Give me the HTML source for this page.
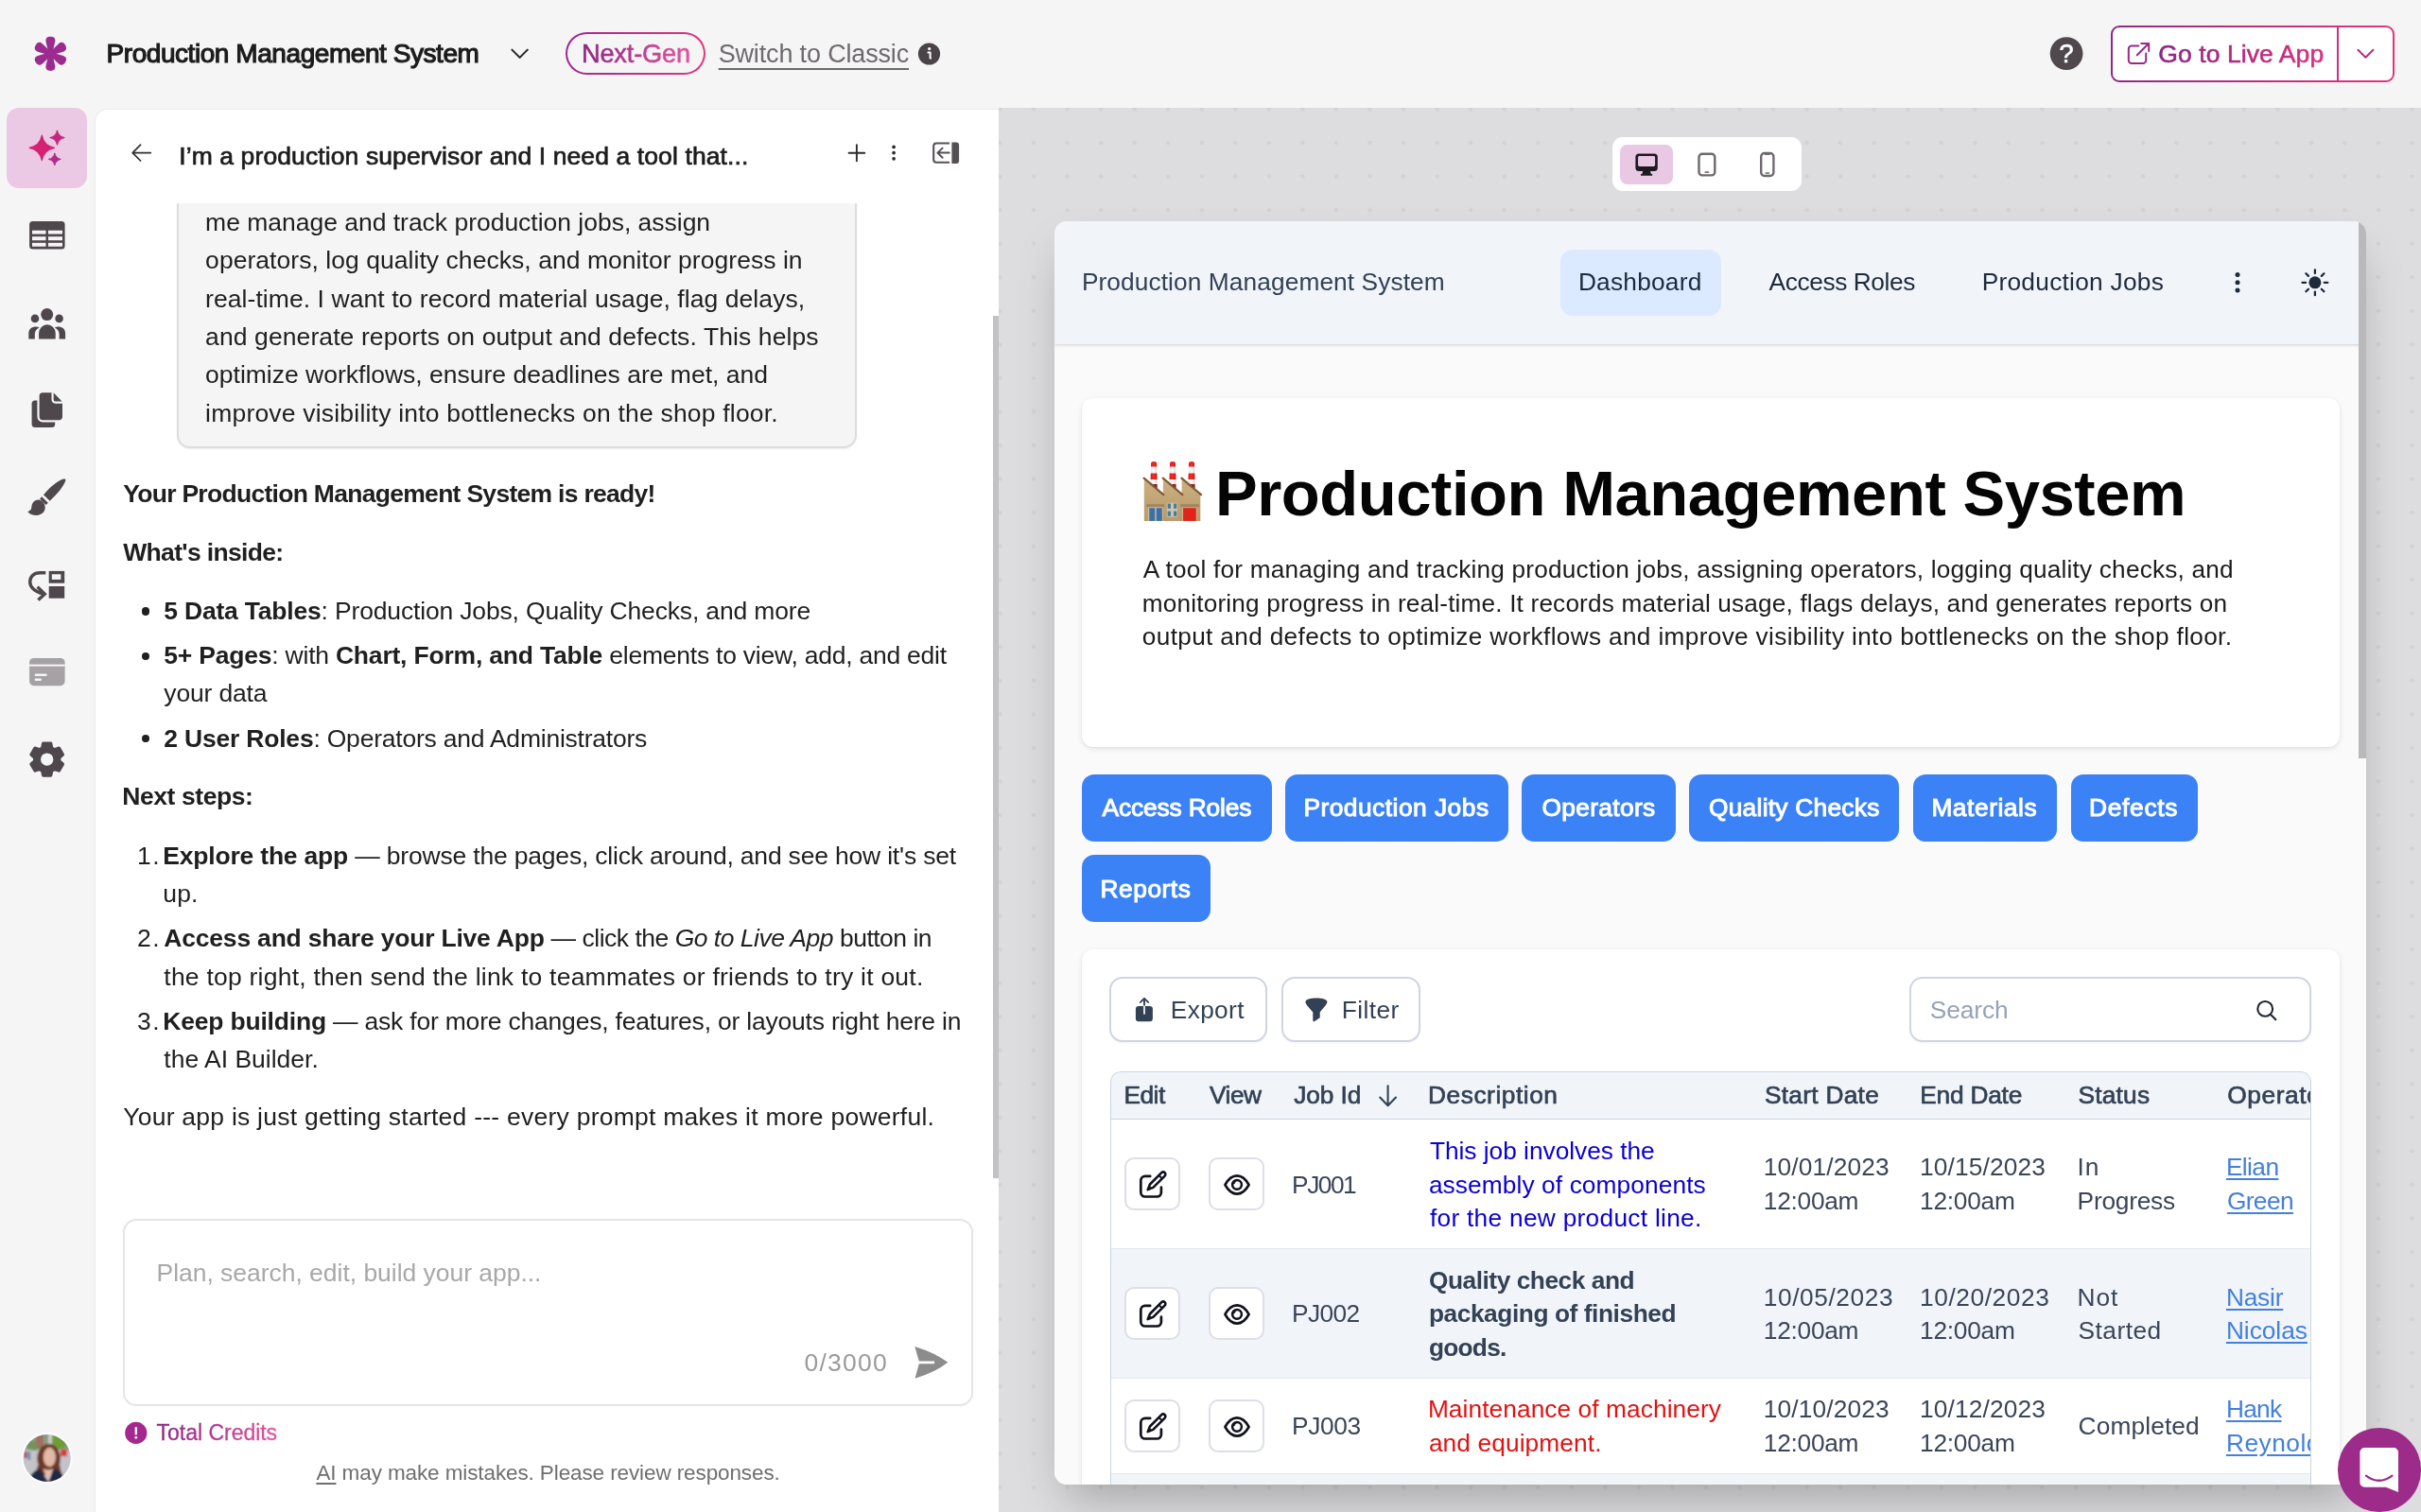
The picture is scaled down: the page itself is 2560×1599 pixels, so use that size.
<!DOCTYPE html>
<html lang="en"><head><meta charset="utf-8"><meta name="viewport" content="width=2560"><title>Production Management System</title>
<style>
*{box-sizing:border-box;margin:0;padding:0}
html,body{width:2560px;height:1599px;overflow:hidden}
body{position:relative;background:#f5f5f5;font-family:"Liberation Sans",sans-serif;color:#1f1f1f}
div,svg,span.t{position:absolute}
.root{left:0;top:0;width:2560px;height:1599px;will-change:transform}
.t{white-space:nowrap;line-height:1}
b{font-weight:700}
</style></head>
<body>
<div class="root">
<div class="pv" style="left:1055.5px;top:114.0px;width:1504.5px;height:1485.0px;background-color:#dddcde;background-image:radial-gradient(circle,#d3d1d5 0,#d3d1d5 1.5px,rgba(211,209,213,0) 2.8px);background-size:35.55px 35.55px;background-position:-16.3px -16.3px;"></div>
<div style="left:100.0px;top:114.5px;width:955.5px;height:1485.5px;background:#fff;border-top-left-radius:14px;border:1px solid #ececec;border-right:none;border-bottom:none;"></div>
<div style="left:1049.5px;top:334.0px;width:6.0px;height:912.0px;background:#c2c1c3;"></div>
<div style="left:186.6px;top:200.0px;width:719.4px;height:274.4px;background:#f5f5f5;border:2px solid #dddddd;border-radius:0 0 14px 14px;box-shadow:0 1px 2px rgba(0,0,0,.07);clip-path:inset(15px -5px -7px -5px);"></div>
<div style="left:149.7px;top:642.3px;width:8.4px;height:8.4px;background:#1f1f1f;border-radius:50%;"></div>
<div style="left:149.7px;top:689.8px;width:8.4px;height:8.4px;background:#1f1f1f;border-radius:50%;"></div>
<div style="left:149.7px;top:777.0px;width:8.4px;height:8.4px;background:#1f1f1f;border-radius:50%;"></div>
<div style="left:129.7px;top:1288.9px;width:898.9px;height:197.7px;background:#fff;border:2px solid #e5e5e5;border-radius:14px;"></div>
<div style="left:7.1px;top:113.6px;width:85.1px;height:85.4px;background:#ebc9e5;border-radius:13px;"></div>
<div style="left:598.4px;top:33.5px;width:147.6px;height:45.8px;border-radius:23px;background:linear-gradient(#f5f5f5,#f5f5f5) padding-box,linear-gradient(90deg,#9a2a90,#e2357c) border-box;border:2px solid transparent;"></div>
<div style="left:2231.5px;top:27.0px;width:300.0px;height:59.6px;border-radius:9px;background:linear-gradient(#fff,#fff) padding-box,linear-gradient(90deg,#8f2a86,#e2357c) border-box;border:2px solid transparent;"></div>
<div style="left:2471.0px;top:28.0px;width:2.0px;height:57.6px;background:#cf2f80;"></div>
<div style="left:1705.0px;top:144.8px;width:199.8px;height:57.6px;background:#fff;border-radius:11px;"></div>
<div style="left:1712.5px;top:152.9px;width:56.5px;height:42.1px;background:#e9c8e3;border-radius:8px;"></div>
<div style="left:1115.0px;top:234.0px;width:1387.0px;height:1336.0px;border-radius:13px;box-shadow:0 25px 50px -12px rgba(0,0,0,.27);"></div>
<div style="left:1115.0px;top:234.0px;width:1387.0px;height:1336.0px;background:#fafafa;border-radius:13px;overflow:hidden;"><div style="left:0.0px;top:0.0px;width:1387.0px;height:130.0px;background:#f1f5f9;box-shadow:0 1px 3px rgba(15,23,42,.18);"></div><div style="left:534.7px;top:29.5px;width:170.3px;height:70.0px;background:#dbeafe;border-radius:13px;"></div><div style="left:29.0px;top:187.0px;width:1330.0px;height:369.0px;background:#fff;border-radius:12px;box-shadow:0 2px 6px rgba(0,0,0,.09),0 1px 2px rgba(0,0,0,.05);"></div><div style="left:29.0px;top:585.0px;width:200.7px;height:71.0px;background:#3b82f6;border-radius:13px;"></div><div style="left:243.9px;top:585.0px;width:236.1px;height:71.0px;background:#3b82f6;border-radius:13px;"></div><div style="left:494.3px;top:585.0px;width:162.7px;height:71.0px;background:#3b82f6;border-radius:13px;"></div><div style="left:671.4px;top:585.0px;width:221.6px;height:71.0px;background:#3b82f6;border-radius:13px;"></div><div style="left:907.9px;top:585.0px;width:152.1px;height:71.0px;background:#3b82f6;border-radius:13px;"></div><div style="left:1074.6px;top:585.0px;width:134.9px;height:71.0px;background:#3b82f6;border-radius:13px;"></div><div style="left:29.0px;top:670.4px;width:136.0px;height:70.8px;background:#3b82f6;border-radius:13px;"></div><div style="left:29.0px;top:770.0px;width:1330.0px;height:696.0px;background:#fff;border-radius:12px;box-shadow:0 2px 6px rgba(0,0,0,.09),0 1px 2px rgba(0,0,0,.05);"></div><div style="left:58.4px;top:799.0px;width:166.3px;height:69.4px;background:#fff;border:2px solid #cfd6e2;border-radius:14px;box-shadow:0 1px 2px rgba(15,23,42,.05);"></div><div style="left:240.0px;top:799.0px;width:147.4px;height:69.4px;background:#fff;border:2px solid #cfd6e2;border-radius:14px;box-shadow:0 1px 2px rgba(15,23,42,.05);"></div><div style="left:904.0px;top:799.0px;width:425.0px;height:69.4px;background:#fff;border:2px solid #cfd6e2;border-radius:14px;box-shadow:0 1px 2px rgba(15,23,42,.05);"></div><div style="left:58.5px;top:899.0px;width:1270.5px;height:567.0px;overflow:hidden;border-radius:11px 11px 0 0;"><div style="left:0.0px;top:0.0px;width:1270.5px;height:51.0px;background:#f1f5f9;border-bottom:1.5px solid #cbd5e1;"></div><div style="left:0.0px;top:187.4px;width:1270.5px;height:137.6px;background:#f1f5f9;border-top:1.5px solid #e2e8f0;border-bottom:1.5px solid #e2e8f0;"></div><div style="left:0.0px;top:425.0px;width:1270.5px;height:142.0px;background:#f1f5f9;border-top:1.5px solid #e2e8f0;"></div><div style="left:15.8px;top:91.3px;width:58.7px;height:56.0px;background:#fff;border:2px solid #dcdee8;border-radius:10px;"></div><div style="left:104.4px;top:91.3px;width:58.7px;height:56.0px;background:#fff;border:2px solid #dcdee8;border-radius:10px;"></div><svg style="left:25.3px;top:99.6px;" width="40.0" height="40.0" viewBox="0 0 40 40"><path d="M17.2,10.9 H11.8 a4.5,4.5 0 0 0 -4.5,4.5 V28.0 a4.5,4.5 0 0 0 4.5,4.5 H24.4 a4.5,4.5 0 0 0 4.5,-4.5 V22.7" fill="none" stroke="#11111c" stroke-width="2.7" stroke-linecap="round"/><g transform="translate(14.4,25.4) rotate(-45)"><path d="M0.4,0 L6,-2.4 H23.4 a2.4,2.4 0 0 1 0,4.8 H6 Z" fill="#fff" stroke="#11111c" stroke-width="2.6" stroke-linejoin="round"/><path d="M0.4,0 L4.6,-1.8 V1.8Z" fill="#11111c"/><path d="M19.4,-2.4 V2.4" stroke="#11111c" stroke-width="2"/></g></svg><svg style="left:114.1px;top:104.6px;" width="40.0" height="30.0" viewBox="0 0 40 30"><path d="M7.4,15 C10.9,8.7 14.9,5.4 20,5.4 C25.1,5.4 29.1,8.7 32.6,15 C29.1,21.3 25.1,24.6 20,24.6 C14.9,24.6 10.9,21.3 7.4,15Z" fill="none" stroke="#11111c" stroke-width="2.6" stroke-linejoin="round"/><circle cx="20" cy="14.8" r="4.9" fill="none" stroke="#11111c" stroke-width="2.5"/><path d="M15.6,14.2 A4.6,4.6 0 0 1 20.4,10.3 A3.6,3.6 0 0 0 17.4,13.6Z" fill="#11111c" stroke="#11111c" stroke-width="1"/></svg><div style="left:15.8px;top:228.3px;width:58.7px;height:56.0px;background:#fff;border:2px solid #dcdee8;border-radius:10px;"></div><div style="left:104.4px;top:228.3px;width:58.7px;height:56.0px;background:#fff;border:2px solid #dcdee8;border-radius:10px;"></div><svg style="left:25.3px;top:236.6px;" width="40.0" height="40.0" viewBox="0 0 40 40"><path d="M17.2,10.9 H11.8 a4.5,4.5 0 0 0 -4.5,4.5 V28.0 a4.5,4.5 0 0 0 4.5,4.5 H24.4 a4.5,4.5 0 0 0 4.5,-4.5 V22.7" fill="none" stroke="#11111c" stroke-width="2.7" stroke-linecap="round"/><g transform="translate(14.4,25.4) rotate(-45)"><path d="M0.4,0 L6,-2.4 H23.4 a2.4,2.4 0 0 1 0,4.8 H6 Z" fill="#fff" stroke="#11111c" stroke-width="2.6" stroke-linejoin="round"/><path d="M0.4,0 L4.6,-1.8 V1.8Z" fill="#11111c"/><path d="M19.4,-2.4 V2.4" stroke="#11111c" stroke-width="2"/></g></svg><svg style="left:114.1px;top:241.6px;" width="40.0" height="30.0" viewBox="0 0 40 30"><path d="M7.4,15 C10.9,8.7 14.9,5.4 20,5.4 C25.1,5.4 29.1,8.7 32.6,15 C29.1,21.3 25.1,24.6 20,24.6 C14.9,24.6 10.9,21.3 7.4,15Z" fill="none" stroke="#11111c" stroke-width="2.6" stroke-linejoin="round"/><circle cx="20" cy="14.8" r="4.9" fill="none" stroke="#11111c" stroke-width="2.5"/><path d="M15.6,14.2 A4.6,4.6 0 0 1 20.4,10.3 A3.6,3.6 0 0 0 17.4,13.6Z" fill="#11111c" stroke="#11111c" stroke-width="1"/></svg><div style="left:15.8px;top:347.3px;width:58.7px;height:56.0px;background:#fff;border:2px solid #dcdee8;border-radius:10px;"></div><div style="left:104.4px;top:347.3px;width:58.7px;height:56.0px;background:#fff;border:2px solid #dcdee8;border-radius:10px;"></div><svg style="left:25.3px;top:355.6px;" width="40.0" height="40.0" viewBox="0 0 40 40"><path d="M17.2,10.9 H11.8 a4.5,4.5 0 0 0 -4.5,4.5 V28.0 a4.5,4.5 0 0 0 4.5,4.5 H24.4 a4.5,4.5 0 0 0 4.5,-4.5 V22.7" fill="none" stroke="#11111c" stroke-width="2.7" stroke-linecap="round"/><g transform="translate(14.4,25.4) rotate(-45)"><path d="M0.4,0 L6,-2.4 H23.4 a2.4,2.4 0 0 1 0,4.8 H6 Z" fill="#fff" stroke="#11111c" stroke-width="2.6" stroke-linejoin="round"/><path d="M0.4,0 L4.6,-1.8 V1.8Z" fill="#11111c"/><path d="M19.4,-2.4 V2.4" stroke="#11111c" stroke-width="2"/></g></svg><svg style="left:114.1px;top:360.6px;" width="40.0" height="30.0" viewBox="0 0 40 30"><path d="M7.4,15 C10.9,8.7 14.9,5.4 20,5.4 C25.1,5.4 29.1,8.7 32.6,15 C29.1,21.3 25.1,24.6 20,24.6 C14.9,24.6 10.9,21.3 7.4,15Z" fill="none" stroke="#11111c" stroke-width="2.6" stroke-linejoin="round"/><circle cx="20" cy="14.8" r="4.9" fill="none" stroke="#11111c" stroke-width="2.5"/><path d="M15.6,14.2 A4.6,4.6 0 0 1 20.4,10.3 A3.6,3.6 0 0 0 17.4,13.6Z" fill="#11111c" stroke="#11111c" stroke-width="1"/></svg><svg style="left:281.5px;top:12.0px;" width="26.0" height="28.0" viewBox="0 0 26 28"><path d="M12.6,3.2 V23.6 M4.2,15.6 L12.6,24.2 L21,15.6" fill="none" stroke="#334155" stroke-width="2.1" stroke-linecap="round" stroke-linejoin="round"/></svg><span class="t" style="left:14.90px;top:12.04px;font-size:26.3px;letter-spacing:-0.474px;color:#334155;-webkit-text-stroke:0.65px currentColor;">Edit</span><span class="t" style="left:105.50px;top:12.04px;font-size:26.3px;letter-spacing:-0.480px;color:#334155;-webkit-text-stroke:0.65px currentColor;">View</span><span class="t" style="left:194.80px;top:12.04px;font-size:26.3px;letter-spacing:-0.123px;color:#334155;-webkit-text-stroke:0.65px currentColor;">Job Id</span><span class="t" style="left:336.60px;top:12.04px;font-size:26.3px;letter-spacing:0.528px;color:#334155;-webkit-text-stroke:0.65px currentColor;">Description</span><span class="t" style="left:692.40px;top:12.04px;font-size:26.3px;letter-spacing:0.282px;color:#334155;-webkit-text-stroke:0.65px currentColor;">Start Date</span><span class="t" style="left:856.80px;top:12.04px;font-size:26.3px;letter-spacing:-0.233px;color:#334155;-webkit-text-stroke:0.65px currentColor;">End Date</span><span class="t" style="left:1024.10px;top:12.04px;font-size:26.3px;letter-spacing:0.177px;color:#334155;-webkit-text-stroke:0.65px currentColor;">Status</span><span class="t" style="left:1181.80px;top:12.04px;font-size:26.3px;letter-spacing:0.550px;color:#334155;-webkit-text-stroke:0.65px currentColor;">Operator</span><span class="t" style="left:192.60px;top:106.54px;font-size:26.3px;letter-spacing:-1.488px;color:#3a4558;">PJ001</span><span class="t" style="left:338.40px;top:70.84px;font-size:26.3px;letter-spacing:-0.022px;color:#0b00d1;">This job involves the</span><span class="t" style="left:337.40px;top:106.54px;font-size:26.3px;letter-spacing:0.094px;color:#0b00d1;">assembly of components</span><span class="t" style="left:338.40px;top:141.94px;font-size:26.3px;letter-spacing:0.281px;color:#0b00d1;">for the new product line.</span><span class="t" style="left:691.30px;top:88.34px;font-size:26.3px;letter-spacing:0.133px;color:#3a4558;">10/01/2023</span><span class="t" style="left:691.30px;top:124.04px;font-size:26.3px;letter-spacing:-0.273px;color:#3a4558;">12:00am</span><span class="t" style="left:856.60px;top:88.34px;font-size:26.3px;letter-spacing:0.122px;color:#3a4558;">10/15/2023</span><span class="t" style="left:856.60px;top:124.04px;font-size:26.3px;letter-spacing:-0.273px;color:#3a4558;">12:00am</span><span class="t" style="left:1023.10px;top:88.34px;font-size:26.3px;letter-spacing:0.800px;color:#3a4558;">In</span><span class="t" style="left:1023.10px;top:124.04px;font-size:26.3px;letter-spacing:-0.241px;color:#3a4558;">Progress</span><span class="t" style="left:1180.40px;top:88.34px;font-size:26.3px;letter-spacing:-0.590px;color:#4380dc;text-decoration:underline;text-decoration-thickness:1.8px;text-underline-offset:3px;">Elian</span><span class="t" style="left:1181.40px;top:124.04px;font-size:26.3px;letter-spacing:-0.617px;color:#4380dc;text-decoration:underline;text-decoration-thickness:1.8px;text-underline-offset:3px;">Green</span><span class="t" style="left:192.60px;top:243.34px;font-size:26.3px;letter-spacing:-0.663px;color:#3a4558;">PJ002</span><span class="t" style="left:337.40px;top:208.04px;font-size:26.3px;font-weight:700;letter-spacing:-0.457px;color:#334155;">Quality check and</span><span class="t" style="left:337.40px;top:243.34px;font-size:26.3px;font-weight:700;letter-spacing:-0.432px;color:#334155;">packaging of finished</span><span class="t" style="left:337.40px;top:279.04px;font-size:26.3px;font-weight:700;letter-spacing:-0.736px;color:#334155;">goods.</span><span class="t" style="left:691.30px;top:225.54px;font-size:26.3px;letter-spacing:0.567px;color:#3a4558;">10/05/2023</span><span class="t" style="left:691.30px;top:260.84px;font-size:26.3px;letter-spacing:-0.273px;color:#3a4558;">12:00am</span><span class="t" style="left:856.60px;top:225.54px;font-size:26.3px;letter-spacing:0.567px;color:#3a4558;">10/20/2023</span><span class="t" style="left:856.60px;top:260.84px;font-size:26.3px;letter-spacing:-0.273px;color:#3a4558;">12:00am</span><span class="t" style="left:1023.10px;top:225.54px;font-size:26.3px;letter-spacing:0.900px;color:#3a4558;">Not</span><span class="t" style="left:1024.10px;top:260.84px;font-size:26.3px;letter-spacing:0.455px;color:#3a4558;">Started</span><span class="t" style="left:1180.40px;top:225.54px;font-size:26.3px;letter-spacing:-0.204px;color:#4380dc;text-decoration:underline;text-decoration-thickness:1.8px;text-underline-offset:3px;">Nasir</span><span class="t" style="left:1180.40px;top:260.84px;font-size:26.3px;letter-spacing:-0.031px;color:#4380dc;text-decoration:underline;text-decoration-thickness:1.8px;text-underline-offset:3px;">Nicolas</span><span class="t" style="left:192.60px;top:362.34px;font-size:26.3px;letter-spacing:-0.413px;color:#3a4558;">PJ003</span><span class="t" style="left:336.40px;top:344.44px;font-size:26.3px;letter-spacing:0.070px;color:#e11212;">Maintenance of machinery</span><span class="t" style="left:337.40px;top:379.84px;font-size:26.3px;letter-spacing:0.101px;color:#e11212;">and equipment.</span><span class="t" style="left:691.30px;top:344.44px;font-size:26.3px;letter-spacing:0.133px;color:#3a4558;">10/10/2023</span><span class="t" style="left:691.30px;top:379.84px;font-size:26.3px;letter-spacing:-0.273px;color:#3a4558;">12:00am</span><span class="t" style="left:856.60px;top:344.44px;font-size:26.3px;letter-spacing:0.122px;color:#3a4558;">10/12/2023</span><span class="t" style="left:856.60px;top:379.84px;font-size:26.3px;letter-spacing:-0.273px;color:#3a4558;">12:00am</span><span class="t" style="left:1024.10px;top:362.34px;font-size:26.3px;letter-spacing:0.119px;color:#3a4558;">Completed</span><span class="t" style="left:1180.40px;top:344.44px;font-size:26.3px;letter-spacing:-0.714px;color:#4380dc;text-decoration:underline;text-decoration-thickness:1.8px;text-underline-offset:3px;">Hank</span><span class="t" style="left:1180.40px;top:379.84px;font-size:26.3px;letter-spacing:0.500px;color:#4380dc;text-decoration:underline;text-decoration-thickness:1.8px;text-underline-offset:3px;">Reynolds</span><div style="left:0.0px;top:0.0px;width:1270.5px;height:567.0px;border:1.5px solid #cbd5e1;border-radius:11px 11px 0 0;"></div></div><svg style="left:0;top:0" width="1387" height="1336" viewBox="1115.0 234.0 1387 1336"><circle cx="2366" cy="290.6" r="2.5" fill="#1e293b"/><circle cx="2366" cy="298.8" r="2.5" fill="#1e293b"/><circle cx="2366" cy="307.0" r="2.5" fill="#1e293b"/><circle cx="2447.9" cy="298.8" r="6.5" fill="#1e293b"/><path d="M2457.7,298.8 L2461.3,298.8" stroke="#1e293b" stroke-width="2.3" stroke-linecap="round"/><path d="M2454.8,305.7 L2457.4,308.3" stroke="#1e293b" stroke-width="2.3" stroke-linecap="round"/><path d="M2447.9,308.6 L2447.9,312.2" stroke="#1e293b" stroke-width="2.3" stroke-linecap="round"/><path d="M2441.0,305.7 L2438.4,308.3" stroke="#1e293b" stroke-width="2.3" stroke-linecap="round"/><path d="M2438.1,298.8 L2434.5,298.8" stroke="#1e293b" stroke-width="2.3" stroke-linecap="round"/><path d="M2441.0,291.9 L2438.4,289.3" stroke="#1e293b" stroke-width="2.3" stroke-linecap="round"/><path d="M2447.9,289.0 L2447.9,285.4" stroke="#1e293b" stroke-width="2.3" stroke-linecap="round"/><path d="M2454.8,291.9 L2457.4,289.3" stroke="#1e293b" stroke-width="2.3" stroke-linecap="round"/><rect x="1200.9" y="1064" width="18" height="16.2" rx="3.2" fill="#334155"/><path d="M1210,1056.4 V1064" stroke="#334155" stroke-width="1.9" stroke-linecap="round"/><path d="M1210,1064 V1072" stroke="#fff" stroke-width="1.7" stroke-linecap="round"/><path d="M1205.9,1059.9 L1210,1055.9 L1214.1,1059.9" fill="none" stroke="#334155" stroke-width="1.9" stroke-linecap="round" stroke-linejoin="round"/><path d="M1380.4,1059.6 C1380.4,1054.2 1403.4,1054.2 1403.4,1059.6 C1403.4,1062.5 1398.6,1066.5 1395.7,1070.6 V1076.2 L1390.2,1080 C1389,1080.8 1388.3,1080 1388.3,1078.8 V1070.6 C1385.2,1066.5 1380.4,1062.5 1380.4,1059.6Z" fill="#334155"/><circle cx="2395.2" cy="1066.9" r="7.9" fill="none" stroke="#1f2433" stroke-width="2.1"/><path d="M2400.9,1072.8 L2406.4,1078.2" stroke="#1f2433" stroke-width="2.1" stroke-linecap="round"/><defs><linearGradient id="fw" x1="0" y1="0" x2="0" y2="1"><stop offset="0" stop-color="#cbb083"/><stop offset="1" stop-color="#b99a6a"/></linearGradient><linearGradient id="fc" x1="0" y1="0" x2="1" y2="0"><stop offset="0" stop-color="#d81a1a"/><stop offset=".5" stop-color="#ff2a22"/><stop offset="1" stop-color="#c41414"/></linearGradient><linearGradient id="fv" x1="0" y1="0" x2="1" y2="0"><stop offset="0" stop-color="#e9dfe3"/><stop offset=".5" stop-color="#ffffff"/><stop offset="1" stop-color="#d9ccd2"/></linearGradient></defs><g transform="translate(1200,480)"><path d="M17.200000000000003,9.2 Q20.1,7 23.0,9.2 L23.7,36 H16.500000000000004Z" fill="url(#fv)"/><path d="M17.200000000000003,9.2 Q20.1,7 23.0,9.2 L23.2,13.6 H17.000000000000004Z" fill="url(#fc)"/><path d="M16.8,20.6 H23.400000000000002 L23.55,27 H16.650000000000002Z" fill="url(#fc)"/><path d="M16.6,32 H23.6 L23.7,36 H16.500000000000004Z" fill="#8e1c28"/><path d="M37.099999999999994,9.2 Q40.0,7 42.900000000000006,9.2 L43.6,36 H36.4Z" fill="url(#fv)"/><path d="M37.099999999999994,9.2 Q40.0,7 42.900000000000006,9.2 L43.1,13.6 H36.9Z" fill="url(#fc)"/><path d="M36.699999999999996,20.6 H43.300000000000004 L43.45,27 H36.55Z" fill="url(#fc)"/><path d="M36.5,32 H43.5 L43.6,36 H36.4Z" fill="#8e1c28"/><path d="M57.099999999999994,9.2 Q60.0,7 62.900000000000006,9.2 L63.6,36 H56.4Z" fill="url(#fv)"/><path d="M57.099999999999994,9.2 Q60.0,7 62.900000000000006,9.2 L63.1,13.6 H56.9Z" fill="url(#fc)"/><path d="M56.699999999999996,20.6 H63.300000000000004 L63.45,27 H56.55Z" fill="url(#fc)"/><path d="M56.5,32 H63.5 L63.6,36 H56.4Z" fill="#8e1c28"/><path d="M9.8,26.5 L29.9,43.4 V26.5 L49.6,43.4 V26.5 L69.3,43.4 V70.9 H9.8Z" fill="url(#fw)"/><path d="M9.6,25.6 L30.200000000000003,43.2" stroke="#7c5c30" stroke-width="2.2" stroke-linecap="round"/><path d="M29.7,25.6 L50.3,43.2" stroke="#7c5c30" stroke-width="2.2" stroke-linecap="round"/><path d="M49.4,25.6 L70.0,43.2" stroke="#7c5c30" stroke-width="2.2" stroke-linecap="round"/><rect x="12.2" y="53.2" width="19" height="3" fill="#a3855a"/><rect x="48.1" y="53.2" width="19.9" height="3" fill="#a3855a"/><rect x="14.4" y="56.6" width="15" height="14.3" fill="#d7d3cc"/><rect x="15.2" y="57.2" width="6.2" height="13.7" fill="#3f6f9e"/><rect x="22.6" y="57.2" width="6.2" height="13.7" fill="#3f6f9e"/><rect x="33.9" y="51.8" width="11.1" height="15" rx="1" fill="#cfc4ad"/><rect x="34.7" y="52.6" width="3.3" height="5.2" fill="#4a7c9c"/><rect x="41.0" y="52.6" width="3.3" height="5.2" fill="#4a7c9c"/><rect x="34.7" y="60.6" width="3.3" height="5.2" fill="#4a7c9c"/><rect x="41.0" y="60.6" width="3.3" height="5.2" fill="#4a7c9c"/><rect x="50.4" y="56.6" width="15.1" height="14.3" fill="#d8b8a4"/><rect x="51.1" y="57.2" width="13.7" height="13.7" fill="#e2231b"/></g></svg><span class="t" style="left:28.90px;top:51.34px;font-size:26.3px;letter-spacing:0.085px;color:#334155;">Production Management System</span><span class="t" style="left:553.90px;top:51.34px;font-size:26.3px;letter-spacing:0.221px;color:#1e293b;">Dashboard</span><span class="t" style="left:755.60px;top:51.34px;font-size:26.3px;letter-spacing:-0.413px;color:#1e293b;">Access Roles</span><span class="t" style="left:980.70px;top:51.34px;font-size:26.3px;letter-spacing:0.255px;color:#1e293b;">Production Jobs</span><span class="t" style="left:169.90px;top:253.78px;font-size:67px;font-weight:700;letter-spacing:-0.446px;color:#050505;">Production Management System</span><span class="t" style="left:93.80px;top:355.42px;font-size:26.2px;letter-spacing:0.209px;color:#1c1c1c;">A tool for managing and tracking production jobs, assigning operators, logging quality checks, and</span><span class="t" style="left:92.80px;top:390.92px;font-size:26.2px;letter-spacing:0.165px;color:#1c1c1c;">monitoring progress in real-time. It records material usage, flags delays, and generates reports on</span><span class="t" style="left:92.80px;top:426.32px;font-size:26.2px;letter-spacing:0.350px;color:#1c1c1c;">output and defects to optimize workflows and improve visibility into bottlenecks on the shop floor.</span><span class="t" style="left:50.50px;top:607.44px;font-size:26.3px;letter-spacing:-0.132px;color:#ffffff;-webkit-text-stroke:1px #fff;">Access Roles</span><span class="t" style="left:263.40px;top:607.44px;font-size:26.3px;letter-spacing:0.505px;color:#ffffff;-webkit-text-stroke:1px #fff;">Production Jobs</span><span class="t" style="left:515.40px;top:607.44px;font-size:26.3px;letter-spacing:0.364px;color:#ffffff;-webkit-text-stroke:1px #fff;">Operators</span><span class="t" style="left:692.00px;top:607.44px;font-size:26.3px;letter-spacing:0.270px;color:#ffffff;-webkit-text-stroke:1px #fff;">Quality Checks</span><span class="t" style="left:927.40px;top:607.44px;font-size:26.3px;letter-spacing:0.570px;color:#ffffff;-webkit-text-stroke:1px #fff;">Materials</span><span class="t" style="left:1094.00px;top:607.44px;font-size:26.3px;letter-spacing:0.715px;color:#ffffff;-webkit-text-stroke:1px #fff;">Defects</span><span class="t" style="left:48.50px;top:692.74px;font-size:26.3px;letter-spacing:0.545px;color:#ffffff;-webkit-text-stroke:1px #fff;">Reports</span><span class="t" style="left:122.80px;top:821.14px;font-size:26.3px;letter-spacing:0.338px;color:#334155;">Export</span><span class="t" style="left:303.80px;top:821.14px;font-size:26.3px;letter-spacing:0.424px;color:#334155;">Filter</span><span class="t" style="left:925.70px;top:821.14px;font-size:26.3px;letter-spacing:-0.061px;color:#94a3b8;">Search</span><div style="left:1379.0px;top:0.0px;width:8.0px;height:568.0px;background:#b9b8bb;border-radius:0 0 0 0;"></div></div>
<svg style="left:0;top:0" width="2560" height="1599" viewBox="0 0 2560 1599"><defs><linearGradient id="gsp" x1="0" y1="0" x2="1" y2="1"><stop offset="0" stop-color="#e01f66"/><stop offset="1" stop-color="#a82c8e"/></linearGradient><linearGradient id="gtx" x1="0" y1="0" x2="1" y2="0"><stop offset="0" stop-color="#8d2683"/><stop offset="1" stop-color="#e2559d"/></linearGradient><linearGradient id="gtx2" x1="0" y1="0" x2="1" y2="0"><stop offset="0" stop-color="#8d2683"/><stop offset="1" stop-color="#dd2f7c"/></linearGradient><clipPath id="avc"><circle cx="49.7" cy="1542" r="25"/></clipPath><filter id="avb" x="-10%" y="-10%" width="120%" height="120%"><feGaussianBlur stdDeviation="0.9"/></filter></defs><path d="M-2.2,-1.5 L-4.9,-12.8 C-5.5,-16.9 -3,-18.1 0,-18.1 C3,-18.1 5.5,-16.9 4.9,-12.8 L2.2,-1.5Z" transform="translate(53.4,56.8) rotate(0)" fill="#9c2b8f"/><path d="M-2.2,-1.5 L-4.9,-12.8 C-5.5,-16.9 -3,-18.1 0,-18.1 C3,-18.1 5.5,-16.9 4.9,-12.8 L2.2,-1.5Z" transform="translate(53.4,56.8) rotate(60)" fill="#9c2b8f"/><path d="M-2.2,-1.5 L-4.9,-12.8 C-5.5,-16.9 -3,-18.1 0,-18.1 C3,-18.1 5.5,-16.9 4.9,-12.8 L2.2,-1.5Z" transform="translate(53.4,56.8) rotate(120)" fill="#9c2b8f"/><path d="M-2.2,-1.5 L-4.9,-12.8 C-5.5,-16.9 -3,-18.1 0,-18.1 C3,-18.1 5.5,-16.9 4.9,-12.8 L2.2,-1.5Z" transform="translate(53.4,56.8) rotate(180)" fill="#9c2b8f"/><path d="M-2.2,-1.5 L-4.9,-12.8 C-5.5,-16.9 -3,-18.1 0,-18.1 C3,-18.1 5.5,-16.9 4.9,-12.8 L2.2,-1.5Z" transform="translate(53.4,56.8) rotate(240)" fill="#9c2b8f"/><path d="M-2.2,-1.5 L-4.9,-12.8 C-5.5,-16.9 -3,-18.1 0,-18.1 C3,-18.1 5.5,-16.9 4.9,-12.8 L2.2,-1.5Z" transform="translate(53.4,56.8) rotate(300)" fill="#9c2b8f"/><circle cx="53.4" cy="56.8" r="3.6" fill="#9c2b8f"/><path d="M541.4,52.6 L549.6,60.9 L557.8,52.6" fill="none" stroke="#222" stroke-width="2" stroke-linecap="round" stroke-linejoin="round"/><circle cx="982.5" cy="57" r="11.6" fill="#4a4449"/><circle cx="982.7" cy="51.6" r="1.55" fill="#fff"/><path d="M980.6,55.4 H983.6 V61.6 H984.9" fill="none" stroke="#fff" stroke-width="2" stroke-linejoin="round"/><circle cx="2185.1" cy="56.6" r="17.4" fill="#4f494e"/><text x="2185.1" y="66" text-anchor="middle" font-family="Liberation Sans, sans-serif" font-weight="400" font-size="27" fill="#fff" stroke="#fff" stroke-width="0.7">?</text><text x="615.0" y="66.4" font-family="Liberation Sans, sans-serif" font-size="27.2" fill="url(#gtx)" stroke="url(#gtx)" stroke-width="0.55" textLength="115" lengthAdjust="spacing">Next-Gen</text><text x="2282.2" y="65.6" font-family="Liberation Sans, sans-serif" font-size="26.5" fill="url(#gtx2)" stroke="url(#gtx2)" stroke-width="0.55" textLength="175" lengthAdjust="spacing">Go to Live App</text><path d="M2261.3,48.6 H2254 a3.2,3.2 0 0 0 -3.2,3.2 V63.8 a3.2,3.2 0 0 0 3.2,3.2 H2266 a3.2,3.2 0 0 0 3.2,-3.2 V56.6" fill="none" stroke="#98298a" stroke-width="2" stroke-linecap="round"/><path d="M2259.8,58.2 L2272,46 M2264.2,46.1 H2272.2 V54.1" fill="none" stroke="#98298a" stroke-width="2" stroke-linecap="round" stroke-linejoin="round"/><path d="M2493.4,52.8 L2501.4,60.8 L2509.4,52.8" fill="none" stroke="#b52d86" stroke-width="2" stroke-linecap="round" stroke-linejoin="round"/><circle cx="143.8" cy="1515.4" r="11.6" fill="#a3298f"/><path d="M143.8,1510.2 V1516.4" stroke="#fff" stroke-width="2.3" stroke-linecap="round"/><circle cx="143.8" cy="1520.3" r="1.4" fill="#fff"/><text x="165.6" y="1523.2" font-family="Liberation Sans, sans-serif" font-size="23" fill="url(#gtx)" stroke="url(#gtx)" stroke-width="0.3" textLength="127.5" lengthAdjust="spacing">Total Credits</text><path d="M44.3,143.20000000000002 Q46.412,154.288 57.5,156.4 Q46.412,158.512 44.3,169.6 Q42.187999999999995,158.512 31.099999999999998,156.4 Q42.187999999999995,154.288 44.3,143.20000000000002Z" fill="#d62273" stroke="#d62273" stroke-width="1.2" stroke-linejoin="round"/><path d="M60.5,137.79999999999998 Q61.748,144.352 68.3,145.6 Q61.748,146.84799999999998 60.5,153.4 Q59.252,146.84799999999998 52.7,145.6 Q59.252,144.352 60.5,137.79999999999998Z" fill="#c6267d" stroke="#c6267d" stroke-width="1" stroke-linejoin="round"/><path d="M57.8,161.9 Q58.839999999999996,167.36 64.3,168.4 Q58.839999999999996,169.44 57.8,174.9 Q56.76,169.44 51.3,168.4 Q56.76,167.36 57.8,161.9Z" fill="#b42a87" stroke="#b42a87" stroke-width="1" stroke-linejoin="round"/><rect x="31.1" y="233.9" width="37.5" height="29.5" rx="3.5" fill="#4e484d"/><rect x="34.0" y="243.7" width="14.5" height="3.8" fill="#f5f5f5"/><rect x="34.0" y="250.2" width="14.5" height="4.0" fill="#f5f5f5"/><rect x="34.0" y="256.8" width="14.5" height="3.9" fill="#f5f5f5"/><rect x="51.0" y="243.7" width="15.0" height="3.8" fill="#f5f5f5"/><rect x="51.0" y="250.2" width="15.0" height="4.0" fill="#f5f5f5"/><rect x="51.0" y="256.8" width="15.0" height="3.9" fill="#f5f5f5"/><circle cx="49.7" cy="332.6" r="6.5" fill="#4e484d"/><circle cx="37" cy="336.9" r="4.3" fill="#4e484d"/><circle cx="62.6" cy="336.9" r="4.3" fill="#4e484d"/><path d="M41.1,358.5 V352.1 a8.8,8.8 0 0 1 17.6,0 V358.5Z" fill="#4e484d"/><path d="M30.3,358.5 V352.6 C30.3,348 33.5,345.6 38,345.6 C39.4,345.6 40.6,345.8 41.6,346.3 C38.6,348 36.8,350.4 36.8,353.2 V358.5Z" fill="#4e484d"/><path d="M69.1,358.5 V352.6 C69.1,348 65.9,345.6 61.4,345.6 C60,345.6 58.8,345.8 57.8,346.3 C60.8,348 62.6,350.4 62.6,353.2 V358.5Z" fill="#4e484d"/><rect x="33.6" y="423.4" width="24.6" height="28.7" rx="3.6" fill="#4e484d"/><path d="M45.2,415.3 H56.6 L66,424.9 V440.6 a3.6,3.6 0 0 1 -3.6,3.6 H45.2 a3.6,3.6 0 0 1 -3.6,-3.6 V418.9 a3.6,3.6 0 0 1 3.6,-3.6Z" fill="#4e484d" stroke="#f5f5f5" stroke-width="4.4" paint-order="stroke"/><path d="M55.6,414.6 V422.6 a3,3 0 0 0 3,3 H66.8" fill="none" stroke="#f5f5f5" stroke-width="2.2"/><g transform="translate(45,531) rotate(-45.5)"><path d="M6.2,-4.7 L15,-5 C23,-4.9 30.5,-3.2 33.4,-1 C34.4,-0.2 34.4,0.7 33.4,1.3 C29.5,3.4 22,4.7 14,4.7 L6.2,4.7Z" fill="#4e484d"/><rect x="0.4" y="-4.6" width="3.2" height="9.2" fill="#4e484d"/></g><path d="M41.2,528.4 C35.8,528.2 33.6,532.4 33.4,536 C33.2,539.4 31.4,540.6 29.2,540.9 C31,543.6 35,545.1 38.8,545 C44.4,544.8 47.8,541 47.7,536.6 C47.6,533 45.6,529.6 41.2,528.4Z" fill="#4e484d"/><rect x="51.7" y="603.9" width="16.5" height="12.8" fill="#4e484d"/><rect x="54.8" y="607.3" width="9.6" height="5.6" fill="#f5f5f5"/><rect x="51.7" y="620" width="16.5" height="12.7" fill="#4e484d"/><path d="M48.3,605.8 H42.4 C35,605.8 31.7,610.6 31.7,615.2 C31.7,620.8 36.6,625.2 45.2,628" fill="none" stroke="#4e484d" stroke-width="3.4"/><path d="M39.6,620.6 L47.3,628.2 L40.4,634.6" fill="none" stroke="#4e484d" stroke-width="3.4" stroke-linejoin="miter"/><rect x="31.1" y="695.9" width="37.5" height="29.3" rx="4.6" fill="#a5a1a4"/><rect x="31.1" y="702.6" width="37.5" height="2.1" fill="#f5f5f5"/><rect x="36.7" y="712.4" width="13" height="2.5" rx="1" fill="#f5f5f5"/><rect x="36.7" y="717.5" width="7.2" height="2.5" rx="1" fill="#f5f5f5"/><path d="M44.12,791.36 L44.76,791.08 L45.73,786.16 L53.67,786.16 L54.64,791.08 L55.28,791.36 L57.08,792.40 L57.64,792.81 L62.39,791.19 L66.36,798.06 L62.58,801.37 L62.66,802.06 L62.66,804.14 L62.58,804.83 L66.36,808.14 L62.39,815.01 L57.64,813.39 L57.08,813.80 L55.28,814.84 L54.64,815.12 L53.67,820.04 L45.73,820.04 L44.76,815.12 L44.12,814.84 L42.32,813.80 L41.76,813.39 L37.01,815.01 L33.04,808.14 L36.82,804.83 L36.74,804.14 L36.74,802.06 L36.82,801.37 L33.04,798.06 L37.01,791.19 L41.76,792.81 L42.32,792.40Z" fill="#4e484d" stroke="#4e484d" stroke-width="3.4" stroke-linejoin="round"/><circle cx="49.7" cy="803.1" r="6.7" fill="#f5f5f5"/><circle cx="49.7" cy="1542" r="27.2" fill="#fbfbfd"/><g clip-path="url(#avc)"><g filter="url(#avb)"><rect x="20" y="1510" width="60" height="64" fill="#c4c3c9"/><rect x="20" y="1510" width="60" height="23" fill="#8a9c80"/><ellipse cx="62" cy="1524" rx="9" ry="9" fill="#6f9c36"/><ellipse cx="36" cy="1529" rx="8" ry="5" fill="#6f955a"/><rect x="38" y="1517" width="8" height="14" fill="#a0705e"/><rect x="51" y="1515" width="4" height="12" fill="#c9c9cf"/><rect x="64" y="1533" width="7" height="7" fill="#d83a3a"/><rect x="25.5" y="1535" width="3" height="7" fill="#b0365c"/><rect x="29.5" y="1535" width="2.5" height="9" fill="#5d85a8"/><ellipse cx="51.6" cy="1542.5" rx="12.2" ry="15.5" fill="#6a3826"/><path d="M40,1550 Q38,1558 36,1560 L66,1560 Q64,1556 63,1548Z" fill="#6a3826"/><ellipse cx="52.4" cy="1541" rx="6.6" ry="10.2" fill="#e4b8a6"/><path d="M30,1570 Q31,1556 42,1553.5 L51,1567 L57,1553 Q67,1556 68,1566 L66,1572 H30Z" fill="#1d2b45"/><path d="M45.5,1553 L51,1567 L56.5,1553 Q51,1556 45.5,1553Z" fill="#e6bfb0"/></g></g><path d="M159.3,161.6 H140.4 M148.6,153.2 L140.2,161.6 L148.6,170" fill="none" stroke="#2e2e2e" stroke-width="1.7" stroke-linecap="round" stroke-linejoin="round"/><path d="M905.9,153.2 V170.2 M897.6,161.7 H914.3" stroke="#2b2b2b" stroke-width="1.9" stroke-linecap="round"/><circle cx="945.1" cy="155.4" r="1.85" fill="#2b2b2b"/><circle cx="945.1" cy="161.6" r="1.85" fill="#2b2b2b"/><circle cx="945.1" cy="167.8" r="1.85" fill="#2b2b2b"/><path d="M1004.1,151.5 H990.2 a3,3 0 0 0 -3,3 V168.8 a3,3 0 0 0 3,3 H1004.1" fill="none" stroke="#555054" stroke-width="2.1"/><path d="M1006.4,150.4 H1011.1 a3,3 0 0 1 3,3 V169.9 a3,3 0 0 1 -3,3 H1006.4Z" fill="#555054"/><path d="M1003.8,161.6 H991.6 M996.6,156.6 L991.4,161.6 L996.6,166.7" fill="none" stroke="#555054" stroke-width="2" stroke-linecap="round" stroke-linejoin="round"/><path d="M967.3,1423.9 Q989,1430.6 1002.3,1440.8 Q989,1451.4 967.5,1457.8 L971.8,1442.3 H988.1 V1439.4 H971.8Z" fill="#8c8c8c"/><rect x="1729.4" y="162.5" width="23.4" height="18.6" rx="3.6" fill="#1f1a21"/><rect x="1732.1" y="165.1" width="18" height="10.9" rx="1.4" fill="#e9c8e3"/><path d="M1737.2,181 H1745 L1745.9,183.9 H1747.2 V185.8 H1735 V183.9 H1736.3Z" fill="#1f1a21"/><rect x="1796.5" y="162.8" width="16.8" height="22.6" rx="3.4" fill="none" stroke="#6e696e" stroke-width="2.4"/><path d="M1802.6,182.1 H1807.2" stroke="#6e696e" stroke-width="1.6"/><rect x="1862.2" y="162" width="13.2" height="24" rx="3.6" fill="none" stroke="#6e696e" stroke-width="2.4"/><path d="M1866,163 H1871.6" stroke="#6e696e" stroke-width="2"/><path d="M1866.6,183.1 H1871" stroke="#6e696e" stroke-width="1.6"/></svg>
<span class="t" style="left:112.50px;top:43.10px;font-size:28px;letter-spacing:-0.437px;color:#1c1c1c;-webkit-text-stroke:1.15px currentColor;">Production Management System</span>
<span class="t" style="left:759.70px;top:43.94px;font-size:27px;letter-spacing:-0.160px;color:#6e696e;text-decoration:underline;text-decoration-thickness:2px;text-underline-offset:5.6px;text-decoration-skip-ink:none;">Switch to Classic</span>
<span class="t" style="left:189.20px;top:151.97px;font-size:26.5px;letter-spacing:0.107px;color:#1c1c1c;-webkit-text-stroke:0.7px currentColor;">I’m a production supervisor and I need a tool that...</span>
<span class="t" style="left:217.10px;top:222.07px;font-size:26.5px;letter-spacing:-0.017px;">me manage and track production jobs, assign</span>
<span class="t" style="left:217.10px;top:262.47px;font-size:26.5px;letter-spacing:0.048px;">operators, log quality checks, and monitor progress in</span>
<span class="t" style="left:217.10px;top:302.77px;font-size:26.5px;letter-spacing:0.066px;">real-time. I want to record material usage, flag delays,</span>
<span class="t" style="left:217.10px;top:343.17px;font-size:26.5px;letter-spacing:0.097px;">and generate reports on output and defects. This helps</span>
<span class="t" style="left:217.10px;top:383.47px;font-size:26.5px;letter-spacing:-0.005px;">optimize workflows, ensure deadlines are met, and</span>
<span class="t" style="left:217.10px;top:423.87px;font-size:26.5px;letter-spacing:0.199px;">improve visibility into bottlenecks on the shop floor.</span>
<span class="t" style="left:130.20px;top:508.77px;font-size:26.5px;font-weight:700;letter-spacing:-0.708px;">Your Production Management System is ready!</span>
<span class="t" style="left:130.20px;top:570.87px;font-size:26.5px;font-weight:700;letter-spacing:-0.666px;">What&#x27;s inside:</span>
<span class="t" style="left:173.30px;top:632.97px;font-size:26.5px;letter-spacing:-0.161px;"><b style="letter-spacing:-0.2px">5 Data Tables</b>: Production Jobs, Quality Checks, and more</span>
<span class="t" style="left:173.30px;top:680.37px;font-size:26.5px;letter-spacing:-0.236px;"><b style="letter-spacing:-0.2px">5+ Pages</b>: with <b style="letter-spacing:-0.2px">Chart, Form, and Table</b> elements to view, add, and edit</span>
<span class="t" style="left:173.30px;top:720.37px;font-size:26.5px;letter-spacing:-0.158px;">your data</span>
<span class="t" style="left:173.30px;top:767.67px;font-size:26.5px;letter-spacing:-0.223px;"><b style="letter-spacing:-0.2px">2 User Roles</b>: Operators and Administrators</span>
<span class="t" style="left:129.20px;top:829.47px;font-size:26.5px;font-weight:700;letter-spacing:-0.413px;">Next steps:</span>
<span class="t" style="left:145.05px;top:891.67px;font-size:26.5px;letter-spacing:1.400px;">1.</span>
<span class="t" style="left:172.30px;top:891.67px;font-size:26.5px;letter-spacing:-0.188px;"><b style="letter-spacing:-0.2px">Explore the app</b> — browse the pages, click around, and see how it's set</span>
<span class="t" style="left:172.30px;top:931.67px;font-size:26.5px;letter-spacing:0.109px;">up.</span>
<span class="t" style="left:145.05px;top:979.37px;font-size:26.5px;letter-spacing:1.400px;">2.</span>
<span class="t" style="left:173.30px;top:979.37px;font-size:26.5px;letter-spacing:-0.495px;"><b style="letter-spacing:-0.2px">Access and share your Live App</b> — click the <i>Go to Live App</i> button in</span>
<span class="t" style="left:173.30px;top:1019.77px;font-size:26.5px;letter-spacing:0.231px;">the top right, then send the link to teammates or friends to try it out.</span>
<span class="t" style="left:145.05px;top:1066.77px;font-size:26.5px;letter-spacing:1.400px;">3.</span>
<span class="t" style="left:172.30px;top:1066.77px;font-size:26.5px;letter-spacing:-0.205px;"><b style="letter-spacing:-0.2px">Keep building</b> — ask for more changes, features, or layouts right here in</span>
<span class="t" style="left:173.30px;top:1107.47px;font-size:26.5px;">the AI Builder.</span>
<span class="t" style="left:130.20px;top:1168.47px;font-size:26.5px;letter-spacing:0.246px;">Your app is just getting started --- every prompt makes it more powerful.</span>
<span class="t" style="left:165.50px;top:1332.57px;font-size:26.5px;letter-spacing:-0.030px;color:#a8a8a8;">Plan, search, edit, build your app...</span>
<span class="t" style="left:850.60px;top:1428.47px;font-size:26.5px;letter-spacing:1.215px;color:#9b9b9b;">0/3000</span>
<span class="t" style="left:334.40px;top:1547.25px;font-size:22.5px;letter-spacing:-0.106px;color:#6f6f6f;"><span style="text-decoration:underline;text-decoration-thickness:1.5px;text-underline-offset:3px">AI</span> may make mistakes. Please review responses.</span>
<div style="left:2471.5px;top:1510.2px;width:88.4px;height:88.4px;background:#9c2b8a;border-radius:50%;"></div>
<svg style="left:2460.0px;top:1500.0px;" width="100.0" height="99.0" viewBox="2460 1500 100 99"><path d="M2500.4,1531.1 H2531 a5,5 0 0 1 5,5 V1577.9 L2522.9,1572.7 H2500.4 a5,5 0 0 1 -5,-5 V1536.1 a5,5 0 0 1 5,-5Z" fill="#fff"/><path d="M2501.9,1560.6 Q2515.6,1571 2529.4,1560.6" fill="none" stroke="#9c2b8a" stroke-width="2.3" stroke-linecap="round"/></svg>
</div>
</body></html>
